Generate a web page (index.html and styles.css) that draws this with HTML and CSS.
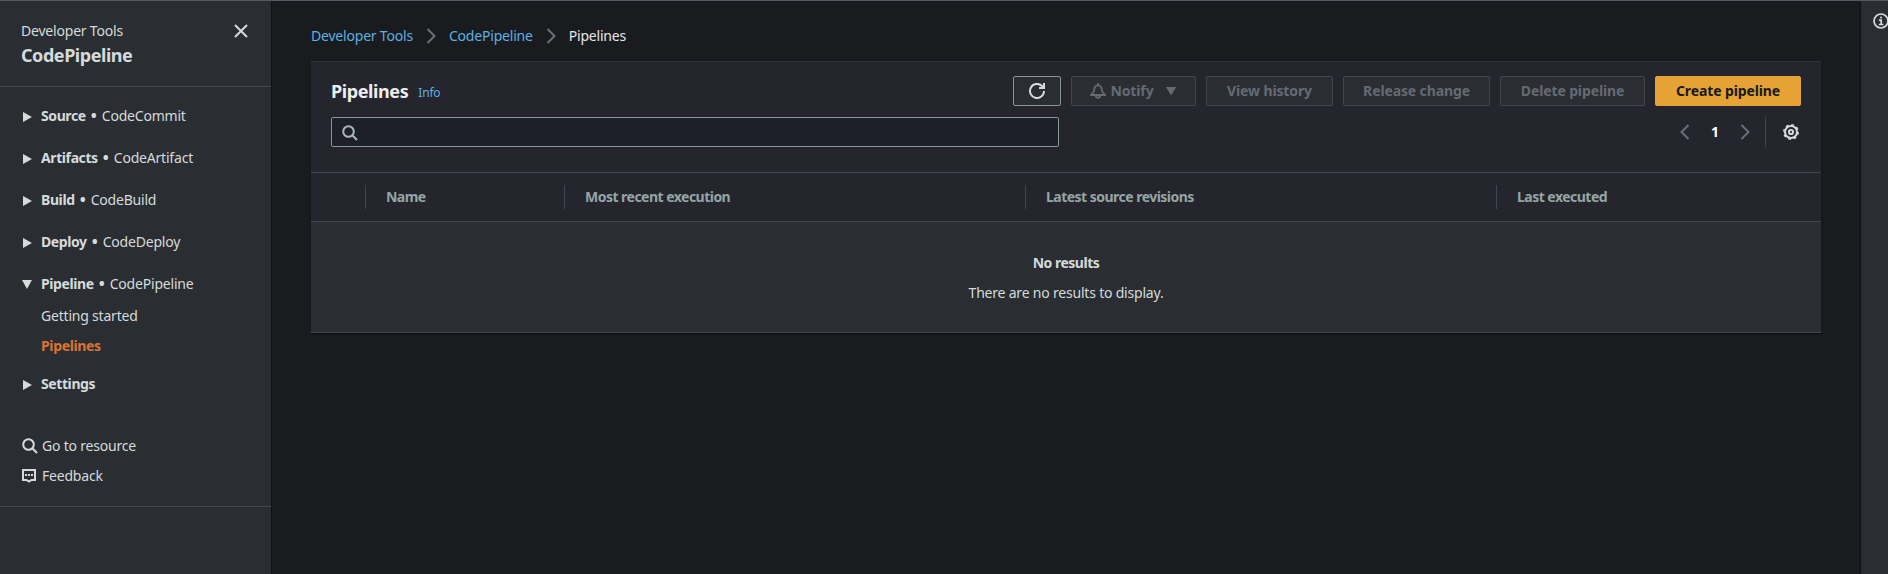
FILE: index.html
```
<!DOCTYPE html>
<html lang="en">
<head>
<meta charset="utf-8">
<title>CodePipeline</title>
<link rel="stylesheet" href="styles.css">
</head>
<body>
<div class="app">
  <aside class="sidebar">
    <header class="side-head">
      <div>
        <div class="side-sub">Developer Tools</div>
        <div class="side-title">CodePipeline</div>
      </div>
      <svg class="close" width="16" height="16" viewBox="0 0 16 16"><path d="M2 2l12 12M14 2L2 14"/></svg>
    </header>
    <nav class="side-nav">
      <div class="group"><i class="caret"></i><span><b>Source</b><em>•</em>CodeCommit</span></div>
      <div class="group"><i class="caret"></i><span><b>Artifacts</b><em>•</em>CodeArtifact</span></div>
      <div class="group"><i class="caret"></i><span><b>Build</b><em>•</em>CodeBuild</span></div>
      <div class="group"><i class="caret"></i><span><b>Deploy</b><em>•</em>CodeDeploy</span></div>
      <div class="group open"><i class="caret down"></i><span><b>Pipeline</b><em>•</em>CodePipeline</span></div>
      <a class="sub">Getting started</a>
      <a class="sub active">Pipelines</a>
      <div class="group settings"><i class="caret"></i><span><b>Settings</b></span></div>
    </nav>
    <div class="side-foot">
      <a class="tool"><svg width="16" height="16" viewBox="0 0 16 16"><circle cx="6.500" cy="6.500" r="5.300"/><path d="M10.300 10.300L15 15"/></svg><span>Go to resource</span></a>
      <a class="tool"><svg width="16" height="16" viewBox="0 0 16 16"><path d="M1 2h12v10H9.500L7 13.500 4.500 12H1z"/><path d="M3 7h2M6 7h2M9 7h2"/></svg><span>Feedback</span></a>
    </div>
  </aside>
  <main class="main">
    <nav class="crumbs">
      <a>Developer Tools</a>
      <svg class="chev" width="16" height="16" viewBox="0 0 16 16"><path d="M4.500 1l7 7-7 7"/></svg>
      <a>CodePipeline</a>
      <svg class="chev" width="16" height="16" viewBox="0 0 16 16"><path d="M4.500 1l7 7-7 7"/></svg>
      <span>Pipelines</span>
    </nav>
    <section class="card">
      <div class="card-head">
        <div class="title-row">
          <h1>Pipelines</h1><a class="info">Info</a>
          <div class="actions">
            <button class="btn refresh"><svg width="16" height="16" viewBox="0 0 16 16"><path d="M15 8a7 7 0 1 1-2.300-5.200L14.500 5"/><path d="M15 0v5h-5"/></svg></button>
            <button class="btn off notify"><svg width="16" height="16" viewBox="0 0 16 16"><path d="M1 12h14l-3-3.500C12 4 10.500 2.300 8 2.300S4 4 4 8.500zM8 0v2.500M5.800 12.500c0 3 4.400 3 4.400 0"/></svg><span>Notify</span><i class="drop"></i></button>
            <button class="btn off view"><span>View history</span></button>
            <button class="btn off release"><span>Release change</span></button>
            <button class="btn off delete"><span>Delete pipeline</span></button>
            <button class="btn create"><span>Create pipeline</span></button>
          </div>
        </div>
        <div class="filter-row">
          <div class="search"><svg width="16" height="16" viewBox="0 0 16 16"><circle cx="6.500" cy="6.500" r="5.300"/><path d="M10.300 10.300L15 15"/></svg></div>
          <div class="pager">
            <svg class="chev" width="16" height="16" viewBox="0 0 16 16"><path d="M11.500 1l-7 7 7 7"/></svg>
            <b>1</b>
            <svg class="chev" width="16" height="16" viewBox="0 0 16 16"><path d="M4.500 1l7 7-7 7"/></svg>
            <div class="gear"><svg width="16" height="16" viewBox="0 0 16 16"><circle class="teeth" cx="8" cy="8" r="7.200"/><circle cx="8" cy="8" r="6"/><circle cx="8" cy="8" r="2.100"/></svg></div>
          </div>
        </div>
      </div>
      <div class="thead">
        <div></div>
        <div class="th">Name</div>
        <div class="th">Most recent execution</div>
        <div class="th">Latest source revisions</div>
        <div class="th">Last executed</div>
      </div>
      <div class="empty">
        <b>No results</b>
        <p>There are no results to display.</p>
      </div>
    </section>
  </main>
  <aside class="tools">
    <svg width="16" height="16" viewBox="0 0 16 16"><circle cx="8" cy="8" r="7"/><path d="M6 7.200h2.200v4M5.800 11.500h4.600M7 4.500h2"/></svg>
  </aside>
</div>
</body>
</html>
```
FILE: styles.css
```
* { box-sizing: border-box; }
body { margin: 0; background: #1a1b1f; color: #d5dbdb; font: 14px/20px "Noto Sans", sans-serif; letter-spacing: -0.2px; }
svg { display: block; flex: none; fill: none; stroke: currentColor; stroke-width: 2; }
.app { display: flex; height: 574px; border-top: 1px solid #545b64; overflow: hidden; }
.sidebar { width: 271px; flex: none; background: #2a2e33; box-shadow: 1px 0 1px #111216; }
.side-head { height: 86px; padding: 20px 22px 0 21px; display: flex; justify-content: space-between; border-bottom: 1px solid #414750; }
.side-title { font-size: 18px; font-weight: 700; line-height: 28px; letter-spacing: -0.45px; }
.close { margin-top: 2px; }
.side-nav { padding-top: 18px; }
.group { height: 42px; padding: 1px 0 0 22px; display: flex; gap: 9px; }
.group b { letter-spacing: -0.4px; }
.group.open { height: 33px; }
.group em { display: inline-block; width: 16px; height: 20px; font-style: normal; font-size: 20px; line-height: 20px; text-align: center; vertical-align: top; }
.caret { width: 10px; height: 10px; margin-top: 6px; display: flex; }
.caret::before { content: ""; width: 9px; height: 10px; margin-left: 1px; background: currentColor; clip-path: polygon(0 0, 100% 50%, 0 100%); }
.caret.down::before { width: 10px; height: 9px; margin-left: 0; clip-path: polygon(0 0, 100% 0, 50% 100%); }
.sub { display: block; height: 30px; padding-left: 41px; }
.sub.active { color: #db7332; font-weight: 700; letter-spacing: -0.35px; }
.settings { height: 42px; padding-top: 8px; }
.side-foot { height: 87px; margin-top: 12px; padding: 16px 0 0 22px; border-bottom: 1px solid #414750; }
.tool { display: flex; gap: 4px; height: 30px; }
.tool svg { margin-top: 2px; }
.main { flex: 1; padding: 25px 40px 0 40px; }
.crumbs { display: flex; height: 35px; }
.crumbs a, .info { color: #5ab1e2; }
.crumbs span { color: #e6e6e6; }
.chev { color: #687078; margin: 2px 10px 0; }
.card { height: 272px; background: #2a2e33; border-top: 1px solid #2f3236; border-bottom: 1px solid #414750; box-shadow: 0 1px 1px #0b0c0e; }
.card-head { height: 110px; padding: 14px 20px 0; background: #24252d; }
.title-row { display: flex; height: 41px; }
h1 { margin: 0; color: #eee; font-size: 18px; line-height: 30px; letter-spacing: -0.4px; }
.info { font-size: 12px; line-height: 34px; margin-left: 10px; letter-spacing: -0.2px; }
.actions { display: flex; gap: 10px; margin-left: auto; }
.btn { display: flex; align-items: center; justify-content: center; height: 30px; padding: 0; border: 1px solid #414750; border-radius: 2px; background: #2a2e33; color: #656a73; font: 700 14px/20px "Noto Sans", sans-serif; white-space: nowrap; letter-spacing: -0.12px; }
.btn.refresh { width: 48px; border-color: #879596; color: #d5dbdb; }
.notify { width: 125px; }
.notify span { margin-left: 4px; }
.notify svg { stroke-width: 1.8; }
.drop { flex: none; width: 11px; height: 9px; margin-left: 12px; background: currentColor; clip-path: polygon(0 0, 100% 0, 50% 100%); }
.view { width: 127px; }
.release { width: 147px; }
.delete { width: 145px; }
.btn.create { width: 146px; background: #e6a234; border-color: #e6a234; color: #16191f; }
.filter-row { display: flex; justify-content: space-between; }
.search { width: 728px; height: 30px; padding: 7px 10px; border: 1px solid #879596; border-radius: 2px; background: #1d2028; color: #aab7b8; }
.pager { display: flex; align-items: center; height: 30px; }
.pager .chev { margin: 0; }
.pager b { width: 44px; text-align: center; color: #fff; }
.gear { display: flex; align-items: center; height: 30px; margin-left: 12px; padding: 0 2px 0 17px; border-left: 1px solid #414750; }
.teeth { stroke-width: 1.500; stroke-dasharray: 2.830 2.830; }
.thead { height: 50px; display: grid; grid-template-columns: 54px 199px 461px 471px 1fr; align-items: center; background: #24252d; border-top: 1px solid #414750; border-bottom: 1px solid #414750; }
.th { height: 24px; padding-left: 20px; border-left: 1px solid #414750; color: #95a5a6; font-weight: 700; line-height: 23px; letter-spacing: -0.52px; }
.empty { text-align: center; padding: 31px 0 0; }
.empty b { letter-spacing: -0.5px; }
.empty p { margin: 10px 0 0; }
.tools { width: 27px; flex: none; padding: 12px 0 0 12px; background: #2a2e33; box-shadow: -1px 0 1px #111216; }
.tools svg { stroke-width: 1.700; }
```
